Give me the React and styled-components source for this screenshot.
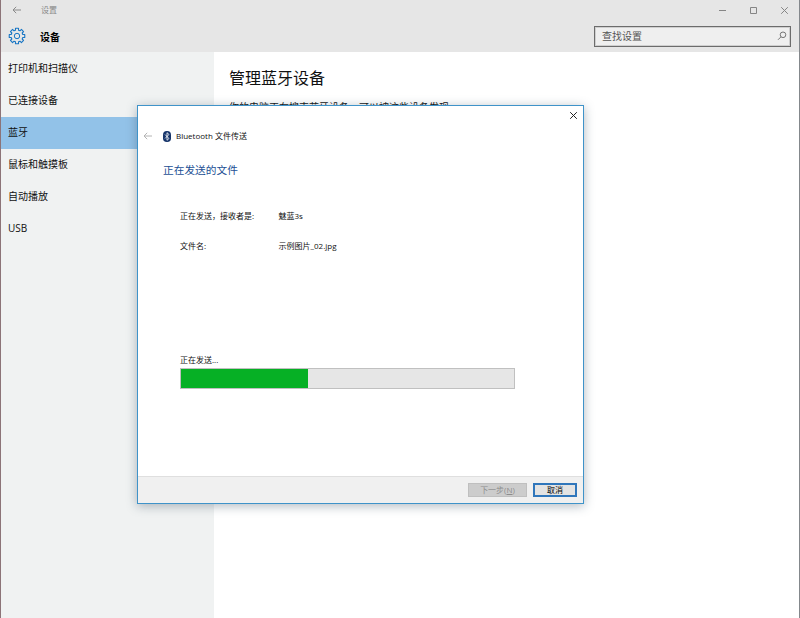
import React from "react";
import styled, { createGlobalStyle } from "styled-components";

const GlobalStyle = createGlobalStyle`
  * {
    box-sizing: border-box;
  }

  body {
    margin: 0;
    font-family: "Open Sans", "Noto Sans CJK SC", sans-serif;
    color: #111;
  }
`;

const Window = styled.div`
  position: relative;
  display: flex;
  flex-direction: column;
  height: 618px;
  overflow: hidden;
  border-left: 1px solid #8c7478;
  border-right: 1px solid #84888c;
  background: #fff;
`;

const Header = styled.header`
  height: 52px;
  background: #e6e6e6;
`;

const TitleBar = styled.div`
  display: flex;
  align-items: center;
  height: 20px;
  padding: 0 10px 0 11px;
`;

const WindowTitle = styled.span`
  flex: 1;
  margin-left: 19px;
  font-size: 8px;
  line-height: 20px;
  color: #888;
`;

const WindowControls = styled.div`
  display: flex;
  align-items: center;
  gap: 22px;
`;

const Toolbar = styled.div`
  display: flex;
  align-items: center;
  height: 32px;
  padding: 0 8px 0 7px;
`;

const PageTitle = styled.h1`
  flex: 1;
  margin: 1px 0 0 14px;
  font-size: 10px;
  font-weight: 700;
  line-height: 14px;
  color: #000;
`;

const SearchBox = styled.div`
  display: flex;
  align-items: center;
  justify-content: space-between;
  width: 197px;
  height: 21px;
  margin-top: 1px;
  padding: 0 3px 1px 7px;
  border: 1px solid #6c6c6c;
  outline: 1px solid rgba(110, 110, 110, 0.25);
  outline-offset: -2px;
  background: #efefef;
  font-size: 10px;
  line-height: 14px;
  color: #555;
`;

const Body = styled.div`
  display: flex;
  flex: 1;
`;

const Sidebar = styled.nav`
  width: 213px;
  padding-top: 1px;
  background: #f0f2f2;
`;

const NavItem = styled.div`
  height: 32px;
  padding-left: 7px;
  font-size: 10px;
  line-height: 31px;
  background: ${(props) => (props.$active ? "#92c2e8" : "transparent")};
`;

const Content = styled.main`
  flex: 1;
  padding: 14px 15px;
`;

const ContentTitle = styled.h2`
  margin: 0;
  font-size: 16px;
  font-weight: 400;
  line-height: 24px;
`;

const Description = styled.p`
  margin: 10px 0 0;
  font-size: 10px;
  line-height: 14px;
`;

const Dialog = styled.section`
  position: absolute;
  left: 136px;
  top: 105px;
  display: flex;
  flex-direction: column;
  width: 447px;
  height: 399px;
  border: 1px solid #3f93c9;
  background: #fff;
  box-shadow: 0 2px 10px rgba(60, 80, 100, 0.4);
  font-size: 8px;
`;

const DialogTop = styled.div`
  display: flex;
  justify-content: flex-end;
  height: 18px;
  padding: 5px 5px 0 0;
`;

const DialogHeader = styled.div`
  display: flex;
  align-items: center;
  gap: 10px;
  height: 24px;
  padding-left: 5px;
`;

const DialogName = styled.span`
  margin-left: -5px;
  line-height: 12px;
`;

const DialogBody = styled.div`
  flex: 1;
  padding: 14px 68px 0 25px;
`;

const DialogTitle = styled.h3`
  margin: 0 0 32px;
  font-size: 10.7px;
  font-weight: 400;
  line-height: 16px;
  color: #1c4f94;
`;

const Field = styled.div`
  display: grid;
  grid-template-columns: 98.5px 1fr;
  height: 30px;
  padding-left: 17px;
  line-height: 12px;
`;

const Progress = styled.div`
  margin: 84px 0 0 17px;
`;

const ProgressLabel = styled.div`
  height: 14px;
  line-height: 12px;
`;

const ProgressTrack = styled.div`
  width: 335px;
  height: 21px;
  border: 1px solid #c0c0c0;
  background: #e6e6e6;
`;

const ProgressFill = styled.div`
  height: 19px;
  background: #06b025;
`;

const DialogFooter = styled.footer`
  display: flex;
  justify-content: flex-end;
  gap: 6px;
  height: 27px;
  padding: 6px 6px 0 0;
  border-top: 1px solid #dfdfdf;
  background: #f0f0f0;
`;

const Button = styled.button`
  width: ${(props) => (props.$primary ? "44px" : "59px")};
  height: 14px;
  padding: 0;
  border: ${(props) =>
    props.$primary ? "2px solid #2f76bb" : "1px solid #bfbfbf"};
  background: ${(props) => (props.$primary ? "#e3e3e3" : "#cccccc")};
  font-family: inherit;
  font-size: 8px;
  line-height: 10px;
  color: ${(props) => (props.$primary ? "#000" : "#8c8c8c")};
`;

const Icon = styled.svg`
  display: block;
  flex: none;
  fill: none;
  stroke: ${(props) => props.$color};
`;

const navItems = [
  "打印机和扫描仪",
  "已连接设备",
  "蓝牙",
  "鼠标和触摸板",
  "自动播放",
  "USB",
];

const fields = [
  { label: "正在发送，接收者是:", value: "魅蓝3s" },
  { label: "文件名:", value: "示例图片_02.jpg" },
];

const progress = 38.2;

// outline of an eight-tooth gear centred on 9,9
const gearPoints = Array.from({ length: 8 }, (_, i) =>
  [
    [-15, 6],
    [-11, 7.9],
    [11, 7.9],
    [15, 6],
  ].map(([offset, radius]) => {
    const angle = ((i * 45 + offset) * Math.PI) / 180;
    return `${9 + radius * Math.cos(angle)},${9 + radius * Math.sin(angle)}`;
  })
)
  .flat()
  .join(" ");

function BackArrow({ color }) {
  return (
    <Icon $color={color} width="10" height="8" viewBox="0 0 10 8">
      <path d="M9 4H1M4.2 0.8L1 4l3.2 3.2" />
    </Icon>
  );
}

function GearIcon() {
  return (
    <Icon $color="#1976c4" width="18" height="18" viewBox="0 0 18 18">
      <polygon points={gearPoints} strokeWidth="1.1" strokeLinejoin="round" />
      <circle cx="9" cy="9" r="2.7" />
    </Icon>
  );
}

function BluetoothIcon() {
  return (
    <Icon $color="#fff" width="8" height="11" viewBox="0 0 8 11">
      <rect width="8" height="11" rx="3.8" fill="#17356b" stroke="none" />
      <path d="M2 3.5l4 4-2 1.8V1.7l2 1.8-4 4" strokeWidth="0.8" />
    </Icon>
  );
}

function App() {
  return (
    <>
      <GlobalStyle />
      <Window>
        <Header>
          <TitleBar>
            <BackArrow color="#8a8a8a" />
            <WindowTitle>设置</WindowTitle>
            <WindowControls>
              <Icon $color="#858585" width="9" height="9" viewBox="0 0 9 9">
                <path d="M1 4.5h7" />
              </Icon>
              <Icon $color="#858585" width="9" height="9" viewBox="0 0 9 9">
                <path d="M1.5 1.5h6v6h-6z" />
              </Icon>
              <Icon $color="#858585" width="9" height="9" viewBox="0 0 9 9">
                <path d="M1.2 1.2l6.6 6.6M7.8 1.2L1.2 7.8" />
              </Icon>
            </WindowControls>
          </TitleBar>
          <Toolbar>
            <GearIcon />
            <PageTitle>设备</PageTitle>
            <SearchBox>
              查找设置
              <Icon $color="#777" width="10" height="10" viewBox="0 0 10 10">
                <circle cx="6" cy="3.8" r="2.8" />
                <path d="M4 5.8L1 8.8" />
              </Icon>
            </SearchBox>
          </Toolbar>
        </Header>
        <Body>
          <Sidebar>
            {navItems.map((item) => (
              <NavItem key={item} $active={item === "蓝牙"}>
                {item}
              </NavItem>
            ))}
          </Sidebar>
          <Content>
            <ContentTitle>管理蓝牙设备</ContentTitle>
            <Description>
              你的电脑正在搜索蓝牙设备，可以被这些设备发现
            </Description>
          </Content>
        </Body>
        <Dialog>
          <DialogTop>
            <Icon $color="#222" width="9" height="9" viewBox="0 0 9 9">
              <path d="M1.2 1.2l6.6 6.6M7.8 1.2L1.2 7.8" />
            </Icon>
          </DialogTop>
          <DialogHeader>
            <BackArrow color="#b4b4b4" />
            <BluetoothIcon />
            <DialogName>Bluetooth 文件传送</DialogName>
          </DialogHeader>
          <DialogBody>
            <DialogTitle>正在发送的文件</DialogTitle>
            {fields.map((field) => (
              <Field key={field.label}>
                <span>{field.label}</span>
                <span>{field.value}</span>
              </Field>
            ))}
            <Progress>
              <ProgressLabel>正在发送...</ProgressLabel>
              <ProgressTrack>
                <ProgressFill style={{ width: `${progress}%` }} />
              </ProgressTrack>
            </Progress>
          </DialogBody>
          <DialogFooter>
            <Button disabled>
              下一步(<u>N</u>)
            </Button>
            <Button $primary>取消</Button>
          </DialogFooter>
        </Dialog>
      </Window>
    </>
  );
}

export default App;
